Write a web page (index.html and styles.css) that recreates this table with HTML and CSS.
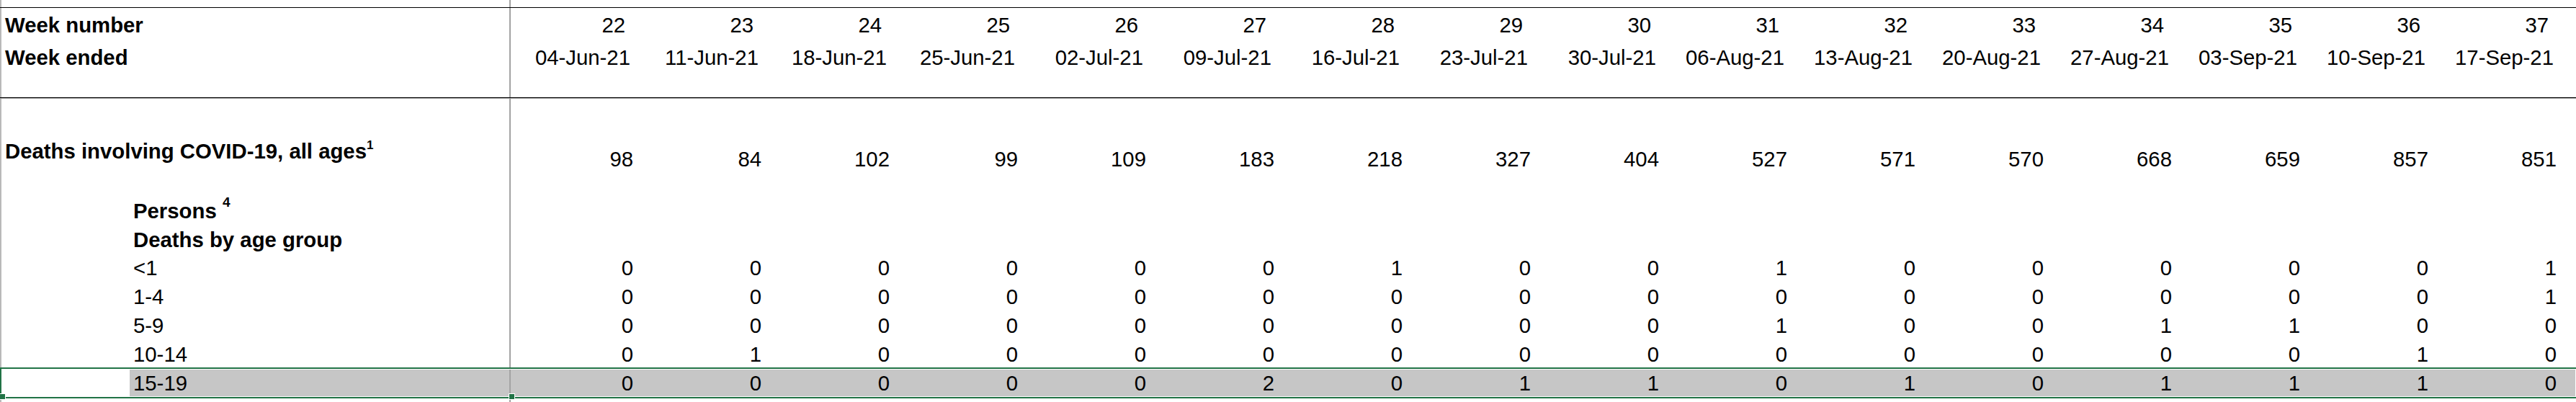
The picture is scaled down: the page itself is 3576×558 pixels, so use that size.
FILE: index.html
```html
<!DOCTYPE html>
<html lang="en">
<head>
<meta charset="utf-8">
<title>Deaths involving COVID-19</title>
<link rel="stylesheet" href="styles.css">
</head>
<body>
<div class="sheet">
  <div class="row r0"><div class="a"></div><div class="b"></div></div>
  <div class="row r1">
    <div class="a bold">Week number</div><div class="b"></div>
    <div class="n">22</div><div class="n">23</div><div class="n">24</div><div class="n">25</div><div class="n">26</div><div class="n">27</div><div class="n">28</div><div class="n">29</div><div class="n">30</div><div class="n">31</div><div class="n">32</div><div class="n">33</div><div class="n">34</div><div class="n">35</div><div class="n">36</div><div class="n">37</div>
  </div>
  <div class="row r2">
    <div class="a bold">Week ended</div><div class="b"></div>
    <div class="n">04-Jun-21</div><div class="n">11-Jun-21</div><div class="n">18-Jun-21</div><div class="n">25-Jun-21</div><div class="n">02-Jul-21</div><div class="n">09-Jul-21</div><div class="n">16-Jul-21</div><div class="n">23-Jul-21</div><div class="n">30-Jul-21</div><div class="n">06-Aug-21</div><div class="n">13-Aug-21</div><div class="n">20-Aug-21</div><div class="n">27-Aug-21</div><div class="n">03-Sep-21</div><div class="n">10-Sep-21</div><div class="n">17-Sep-21</div>
  </div>
  <div class="row r3"><div class="a"></div><div class="b"></div></div>
  <div class="row r4"><div class="a"></div><div class="b"></div></div>
  <div class="row r5">
    <div class="a bold"><span class="lbl">Deaths involving COVID-19, all ages<sup class="sup1">1</sup></span></div><div class="b"></div>
    <div class="n">98</div><div class="n">84</div><div class="n">102</div><div class="n">99</div><div class="n">109</div><div class="n">183</div><div class="n">218</div><div class="n">327</div><div class="n">404</div><div class="n">527</div><div class="n">571</div><div class="n">570</div><div class="n">668</div><div class="n">659</div><div class="n">857</div><div class="n">851</div>
  </div>
  <div class="row r6"><div class="a"></div><div class="b bold"><span class="lbl">Persons <sup class="sup4">4</sup></span></div></div>
  <div class="row r7"><div class="a"></div><div class="b bold">Deaths by age group</div></div>
  <div class="row age">
    <div class="a"></div><div class="b">&lt;1</div>
    <div class="n">0</div><div class="n">0</div><div class="n">0</div><div class="n">0</div><div class="n">0</div><div class="n">0</div><div class="n">1</div><div class="n">0</div><div class="n">0</div><div class="n">1</div><div class="n">0</div><div class="n">0</div><div class="n">0</div><div class="n">0</div><div class="n">0</div><div class="n">1</div>
  </div>
  <div class="row age">
    <div class="a"></div><div class="b">1-4</div>
    <div class="n">0</div><div class="n">0</div><div class="n">0</div><div class="n">0</div><div class="n">0</div><div class="n">0</div><div class="n">0</div><div class="n">0</div><div class="n">0</div><div class="n">0</div><div class="n">0</div><div class="n">0</div><div class="n">0</div><div class="n">0</div><div class="n">0</div><div class="n">1</div>
  </div>
  <div class="row age">
    <div class="a"></div><div class="b">5-9</div>
    <div class="n">0</div><div class="n">0</div><div class="n">0</div><div class="n">0</div><div class="n">0</div><div class="n">0</div><div class="n">0</div><div class="n">0</div><div class="n">0</div><div class="n">1</div><div class="n">0</div><div class="n">0</div><div class="n">1</div><div class="n">1</div><div class="n">0</div><div class="n">0</div>
  </div>
  <div class="row age">
    <div class="a"></div><div class="b">10-14</div>
    <div class="n">0</div><div class="n">1</div><div class="n">0</div><div class="n">0</div><div class="n">0</div><div class="n">0</div><div class="n">0</div><div class="n">0</div><div class="n">0</div><div class="n">0</div><div class="n">0</div><div class="n">0</div><div class="n">0</div><div class="n">0</div><div class="n">1</div><div class="n">0</div>
  </div>
  <div class="row age sel">
    <div class="a"></div><div class="b">15-19</div>
    <div class="n">0</div><div class="n">0</div><div class="n">0</div><div class="n">0</div><div class="n">0</div><div class="n">2</div><div class="n">0</div><div class="n">1</div><div class="n">1</div><div class="n">0</div><div class="n">1</div><div class="n">0</div><div class="n">1</div><div class="n">1</div><div class="n">1</div><div class="n">0</div><div class="tail"></div>
    <span class="handle h-left"></span><span class="handle h-mid"></span>
  </div>
  <div class="row r13"><div class="a"></div><div class="b"></div></div>
</div>
</body>
</html>
```
FILE: styles.css
```css
* {
  box-sizing: border-box;
  margin: 0;
  padding: 0;
}

html, body {
  background: #ffffff;
}

body {
  margin: 0;
  width: 3576px;
  height: 558px;
  overflow: hidden;
  font-family: "Liberation Sans", Arial, sans-serif;
  font-size: 29.33px;
  line-height: 34px;
  color: #000000;
}

.sheet {
  width: 3576px;
}

.row {
  display: grid;
  grid-template-columns: 180px 529px repeat(16, 178px) 1fr;
}

.a,
.b,
.n,
.tail {
  display: flex;
  align-items: flex-end;
  white-space: nowrap;
}

.lbl {
  display: block;
  white-space: pre;
}

.a {
  border-left: 2px solid #b9b9b9;
  padding-left: 5px;
}

.b {
  border-right: 2px solid #a3a3a3;
  padding-left: 5px;
}

.n {
  justify-content: flex-end;
  padding-right: 8px;
}

.bold {
  font-weight: 700;
}

/* row geometry */
.r0 {
  height: 11px;
  border-bottom: 1px solid #000000;
}

.r1 {
  height: 41px;
}

.r1 .n {
  padding-right: 19px;
}

.r2 {
  height: 45px;
}

.r2 .n {
  padding-right: 12px;
}

.r3 {
  height: 39px;
  border-bottom: 1px solid #000000;
}

.r4 {
  height: 37px;
  border-top: 1px solid #9a9a9a;
}

.r5 {
  height: 65px;
}

.r5 .a {
  padding-bottom: 11px;
}

.r6 {
  height: 74px;
}

.r6 .b,
.r7 .b {
  padding-bottom: 2px;
}

.r7 {
  height: 40px;
}

.age {
  height: 40px;
}

.age .b,
.age .n {
  padding-bottom: 3px;
}

.r13 {
  height: 6px;
}

/* superscripts */
.sup1 {
  font-size: 17px;
  line-height: 0;
  vertical-align: 13px;
  font-weight: 700;
}

.sup4 {
  font-size: 19px;
  line-height: 0;
  vertical-align: 16px;
  font-weight: 700;
}

/* selected row */
.sel {
  position: relative;
}

.sel .b,
.sel .n,
.sel .tail {
  background: #c6c6c6;
}

.sel::after {
  content: "";
  position: absolute;
  left: 0;
  right: 0;
  top: -2px;
  bottom: -1px;
  border: 2px solid #217346;
  border-right: none;
  box-shadow: inset 0 0 0 1px #ffffff;
  pointer-events: none;
}

.handle {
  position: absolute;
  bottom: -2px;
  width: 7px;
  height: 7px;
  background: #217346;
  box-shadow: 0 0 0 1px #ffffff;
  z-index: 2;
}

.h-left {
  left: 0;
}

.h-mid {
  left: 707px;
}
```
